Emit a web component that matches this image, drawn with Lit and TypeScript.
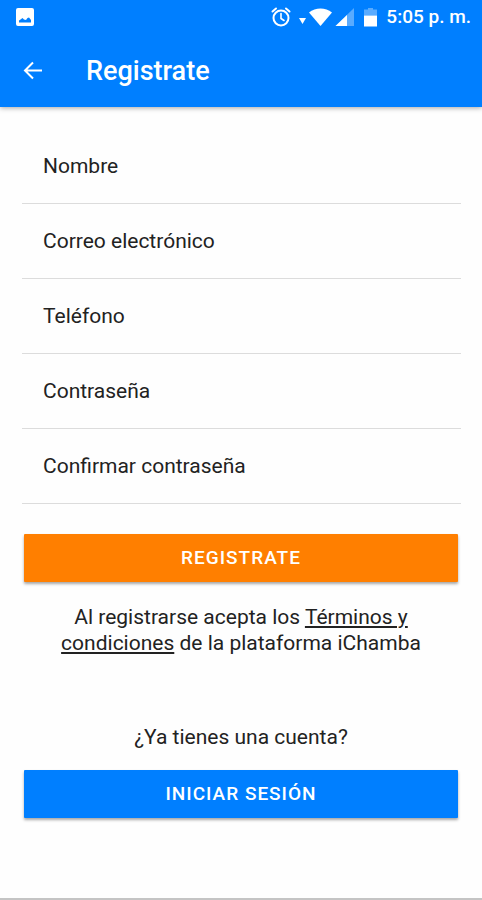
import { LitElement, html, css } from "lit";
import { customElement } from "lit/decorators.js";

interface Field {
  id: string;
  label: string;
  type: string;
}

const FIELDS: Field[] = [
  { id: "nombre", label: "Nombre", type: "text" },
  { id: "correo", label: "Correo electrónico", type: "email" },
  { id: "telefono", label: "Teléfono", type: "tel" },
  { id: "contrasena", label: "Contraseña", type: "password" },
  { id: "confirmar", label: "Confirmar contraseña", type: "password" },
];

@customElement("status-bar")
export class StatusBar extends LitElement {
  static styles = css`
    :host {
      display: flex;
      align-items: center;
      justify-content: space-between;
      height: 34px;
      padding: 0 11px 0 16px;
      color: #fff;
      font-size: 19px;
      font-weight: 500;
    }
    svg {
      display: block;
    }
    .tray {
      display: flex;
      align-items: center;
    }
    .time {
      margin-left: 8px;
      line-height: 34px;
    }
  `;

  render() {
    return html`
      <svg width="18" height="18" viewBox="0 0 18 18" aria-hidden="true">
        <path
          fill="#fff"
          fill-rule="evenodd"
          d="M2 0h14a2 2 0 0 1 2 2v14a2 2 0 0 1-2 2H2a2 2 0 0 1-2-2V2a2 2 0 0 1 2-2zM3 14.500h12v-2.500l-2-2.500-1.500 .5-1.500 2-2-.5-1.500-1.500-2 1.500-1.500 1z"
        />
      </svg>
      <div class="tray">
        <svg width="108" height="22" viewBox="0 0 108 22" aria-hidden="true">
          <g fill="none" stroke="#fff" stroke-width="2" stroke-linecap="round">
            <circle cx="11" cy="12" r="7.500" />
            <path d="M11 7.500v5l3 2" stroke-width="1.600" />
            <path d="M2.500 5.500 6 2.500M19.500 5.500 16 2.500" />
          </g>
          <path fill="#fff" d="M29 12h7l-3.500 6z" />
          <path fill="#fff" d="M39 6.500C45.500 1 55.500 1 62 6.500L50.500 20z" />
          <path fill="#fff" opacity=".35" d="M84 2v18H65.500z" />
          <path fill="#fff" d="M77 9v11H65.500z" />
          <path fill="#fff" opacity=".35" d="M98 2h5v1.500h4V9.500H94V3.500h4z" />
          <path fill="#fff" d="M94 9.500h13v11H94z" />
        </svg>
        <span class="time">5:05 p. m.</span>
      </div>
    `;
  }
}

@customElement("app-root")
export class AppRoot extends LitElement {
  static styles = css`
    :host {
      display: flex;
      flex-direction: column;
      box-sizing: border-box;
      min-height: 100vh;
      background: #fefefe;
      border-bottom: 2px solid #c4c4c4;
      color: #222;
      font-family: Roboto, "Liberation Sans", sans-serif;
      font-size: 21px;
    }
    .header {
      background: #007fff;
      box-shadow: 0 1px 5px rgba(0, 0, 0, 0.35);
    }
    .toolbar {
      display: flex;
      align-items: center;
      gap: 42px;
      height: 73px;
      padding-left: 22px;
      color: #fff;
    }
    .back {
      display: flex;
      padding: 0;
      border: 0;
      background: none;
      color: inherit;
    }
    h1 {
      margin: 0;
      font-size: 27px;
      font-weight: 500;
    }
    .fields {
      padding: 22px 21px 0 22px;
    }
    .field {
      display: flex;
      align-items: center;
      gap: 16px;
      box-sizing: border-box;
      height: 75px;
      padding: 0 21px;
      border-bottom: 1px solid #dcdcdc;
    }
    .field input {
      flex: 1;
      min-width: 0;
      padding: 0;
      border: 0;
      outline: 0;
      background: none;
      color: inherit;
      font: inherit;
    }
    .actions {
      display: flex;
      flex-direction: column;
      padding: 30px 24px;
      text-align: center;
    }
    .button {
      height: 48px;
      padding: 0;
      border: 0;
      border-radius: 1px;
      box-shadow: 0 2px 3px rgba(0, 0, 0, 0.35);
      color: #fff;
      font: 500 19px/48px Roboto, "Liberation Sans", sans-serif;
      letter-spacing: 1px;
      text-transform: uppercase;
    }
    .register {
      background: #ff7f00;
    }
    .login {
      background: #007fff;
    }
    p {
      margin: 0;
      line-height: 26px;
    }
    .terms {
      padding: 22px 24px 68px;
    }
    .question {
      padding-bottom: 20px;
    }
    a {
      color: inherit;
    }
  `;

  render() {
    return html`
      <header class="header">
        <status-bar></status-bar>
        <div class="toolbar">
          <button class="back" aria-label="Volver">
            <svg width="22" height="22" viewBox="0 0 22 22" fill="none" stroke="currentColor" stroke-width="2">
              <path d="M20 10.500H3M11 2.500l-8 8 8 8" />
            </svg>
          </button>
          <h1>Registrate</h1>
        </div>
      </header>
      <form @submit=${(e: Event) => e.preventDefault()}>
        <div class="fields">
          ${FIELDS.map(
            (f) => html`
              <div class="field">
                <label for=${f.id}>${f.label}</label>
                <input id=${f.id} name=${f.id} type=${f.type} />
              </div>
            `,
          )}
        </div>
        <div class="actions">
          <button class="button register" type="submit">Registrate</button>
          <p class="terms">
            Al registrarse acepta los <a href="#terminos">Términos y condiciones</a> de la plataforma iChamba
          </p>
          <p class="question">¿Ya tienes una cuenta?</p>
          <button class="button login" type="button">Iniciar sesión</button>
        </div>
      </form>
    `;
  }
}
